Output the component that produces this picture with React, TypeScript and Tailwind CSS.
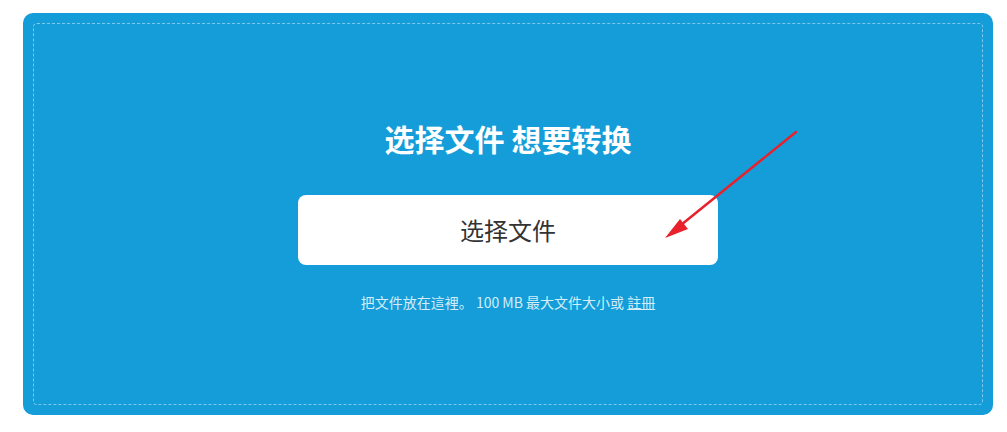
export default function App() {
  return (
    <div className="relative h-[432px] w-[1007px] bg-white font-['Noto_Sans_CJK_SC','Noto_Sans',sans-serif]">
      <div className="ml-[23px] pt-[13px]">
        <div className="h-[402px] w-[970px] rounded-[10px] bg-[#149dd8] p-[10px]">
          <div className="flex h-full flex-col items-center rounded-[4px] border border-dashed border-[#7ec8ec] pt-[95px]">
            <h1 className="text-[30px] font-bold leading-[38px] text-white">选择文件 想要转换</h1>
            <button className="mt-[38px] h-[70px] w-[420px] rounded-[8px] bg-white text-[24px] text-[#333333]">
              选择文件
            </button>
            <p className="mt-[27px] text-[14px] leading-[20px] text-[#d3edf9]">
              把文件放在這裡。 100 MB 最大文件大小或 <span className="underline">註冊</span>
            </p>
          </div>
        </div>
      </div>
      <svg className="pointer-events-none absolute left-0 top-0" width="1007" height="432">
        <line x1="796" y1="132" x2="676" y2="229" stroke="#e8212b" strokeWidth="2.5" strokeLinecap="round" />
        <polygon points="665,238 680,219 688,229" fill="#e8212b" />
      </svg>
    </div>
  );
}
